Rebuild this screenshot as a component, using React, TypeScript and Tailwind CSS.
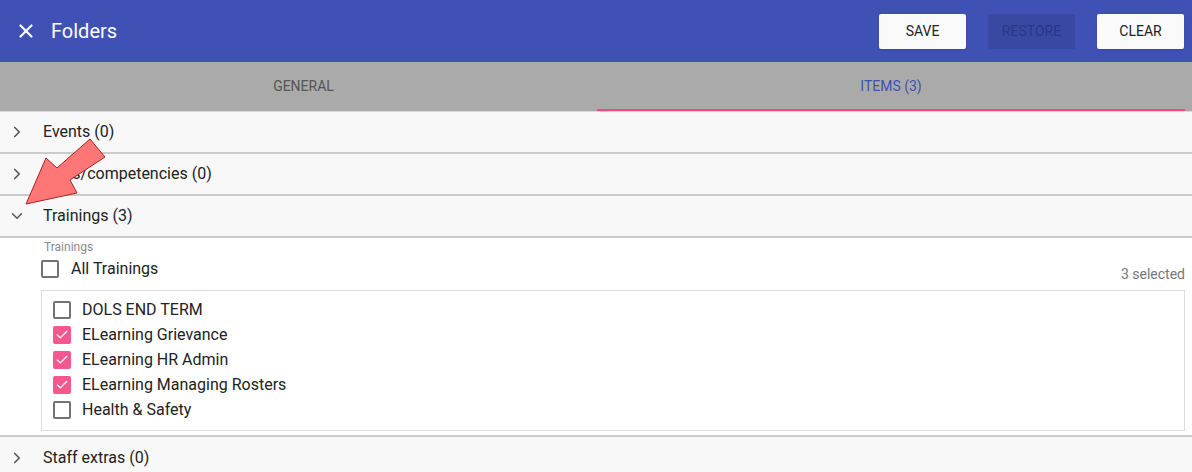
import { ChevronRight, ChevronDown, X, Check } from "lucide-react"

const trainings = [
  { name: "DOLS END TERM", checked: false },
  { name: "ELearning Grievance", checked: true },
  { name: "ELearning HR Admin", checked: true },
  { name: "ELearning Managing Rosters", checked: true },
  { name: "Health & Safety", checked: false },
]

function Box({ checked }: { checked: boolean }) {
  return checked ? (
    <div className="h-[18px] w-[18px] rounded-[2px] bg-[#f7578f] flex items-center justify-center flex-shrink-0">
      <Check size={14} strokeWidth={2.2} className="text-white" />
    </div>
  ) : (
    <div className="h-[18px] w-[18px] rounded-[2px] border-2 border-[#737373] flex-shrink-0" />
  )
}

function Row({ label, open, last }: { label: string; open?: boolean; last?: boolean }) {
  return (
    <div className={`h-[42px] flex items-center bg-[#f8f8f8] ${last ? "" : "border-b-2 border-[#cbcbcb]"}`}>
      <div className="w-[43px] pl-[8px] flex items-center text-[#555]">
        {open ? <ChevronDown size={18} strokeWidth={2} /> : <ChevronRight size={18} strokeWidth={2.2} />}
      </div>
      <span className="text-[16px] text-[#222]">{label}</span>
    </div>
  )
}

export default function App() {
  return (
    <div className="relative w-[1192px] h-[472px] overflow-hidden bg-white" style={{ fontFamily: "Roboto, 'Liberation Sans', sans-serif" }}>
      {/* header */}
      <div className="h-[62px] bg-[#3f51b5] flex items-center pl-[15px] pr-[8px]">
        <X size={22} strokeWidth={2.4} className="text-white" />
        <span className="ml-[14px] text-[20px] text-white">Folders</span>
        <div className="ml-auto flex gap-[22px]">
          <button className="w-[87px] h-[35px] bg-[#fafafa] rounded-[2px] shadow text-[14px] text-[#222]">SAVE</button>
          <button className="w-[87px] h-[35px] bg-[#3949a3] rounded-[2px] text-[14px] text-[#2a3785]">RESTORE</button>
          <button className="w-[87px] h-[35px] bg-[#fafafa] rounded-[2px] shadow text-[14px] text-[#222]">CLEAR</button>
        </div>
      </div>

      {/* tabs */}
      <div className="h-[50px] bg-[#aaaaaa] border-b border-[#d8d8d8] flex">
        <div className="w-[597px] flex items-center justify-center pl-[10px] text-[14px] text-[#555]">GENERAL</div>
        <div className="w-[588px] flex items-center justify-center text-[14px] text-[#3f51b5] border-b-2 border-[#f5467e] pt-[2px]">ITEMS (3)</div>
      </div>

      {/* panels */}
      <Row label="Events (0)" />
      <Row label="Skills/competencies (0)" />
      <Row label="Trainings (3)" open />

      <div className="bg-white pl-[41px] pr-[7px] pt-[2px] pb-[4px] border-b-2 border-[#cbcbcb]">
        <div className="pl-[3px] text-[12px] text-[#8a8a8a] leading-[14px]">Trainings</div>
        <div className="h-[20px] flex items-center mt-[5px]">
          <Box checked={false} />
          <span className="ml-[12px] text-[16px] text-[#222]">All Trainings</span>
          <span className="ml-auto text-[14px] text-[#777] mt-[11px]">3 selected</span>
        </div>
        <div className="mt-[11px] border border-[#dcdcdc] pl-[11px] pt-[6px] pb-[8px]">
          {trainings.map((t) => (
            <div key={t.name} className="h-[25px] flex items-center">
              <Box checked={t.checked} />
              <span className="ml-[11px] text-[16px] text-[#222]">{t.name}</span>
            </div>
          ))}
        </div>
      </div>

      <Row label="Staff extras (0)" last />

      {/* annotation arrow */}
      <svg className="absolute left-0 top-0 pointer-events-none" width="120" height="220" viewBox="0 0 120 220">
        <polygon
          points="26,204 46,158 57,168 90,139 105,157 70,180 77,193"
          fill="#ff7676"
          stroke="#a82222"
          strokeWidth="1"
          strokeLinejoin="miter"
        />
      </svg>
    </div>
  )
}
